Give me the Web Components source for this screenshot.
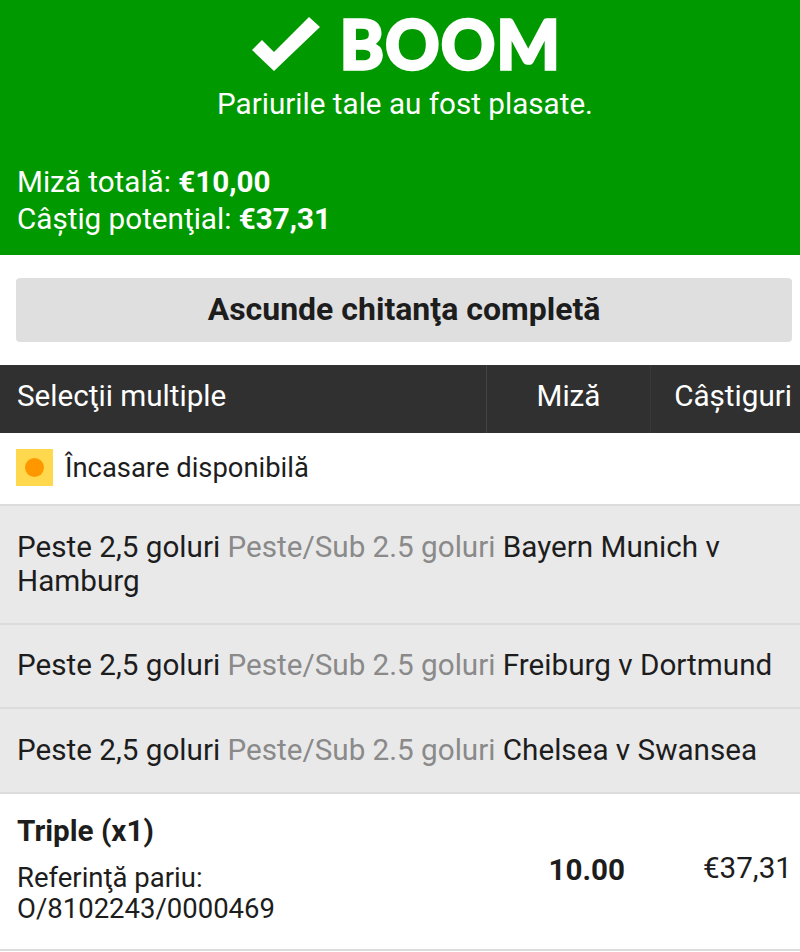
<!DOCTYPE html>
<html lang="ro">
<head>
<meta charset="UTF-8">
<title>Chitanta</title>
<style>
  html, body { margin: 0; padding: 0; background: #fff; overflow: hidden; }
  body { font: 29.65px/34px Roboto, "Noto Sans", sans-serif; color: #1d1d1d; }
</style>
</head>
<body>
  <boom-banner>
    <span slot="stake">Miză totală: <b>€10,00</b></span>
    <span slot="win">Câştig potenţial: <b>€37,31</b></span>
  </boom-banner>
  <toggle-button>Ascunde chitanţa completă</toggle-button>
  <table-head></table-head>
  <cashout-row>Încasare disponibilă</cashout-row>
  <selection-row height="119"><span>Bayern Munich v</span> <span>Hamburg</span></selection-row>
  <selection-row height="84"><span>Freiburg v Dortmund</span></selection-row>
  <selection-row height="85"><span>Chelsea v Swansea</span></selection-row>
  <bet-summary></bet-summary>

  <template id="banner-template">
    <style>
      :host { display: block; height: 255px; background: #009900; color: #fff; box-sizing: border-box; padding: 0 17px; }
      .title { display: flex; justify-content: center; align-items: center; gap: 19px; height: 86px; padding-left: 13px; }
      .title svg { width: 69px; height: 54px; margin-top: 1px; }
      .word { font: 700 67px/86px Lato, sans-serif; letter-spacing: 1.5px; -webkit-text-stroke: 3.5px #fff; paint-order: stroke; }
      .sub { text-align: center; line-height: 36px; margin-bottom: 41px; padding-left: 10px; }
      .line { display: block; line-height: 37px; }
      ::slotted(span) { display: block; }
    </style>
    <div class="title">
      <svg viewBox="0 0 69 54"><path d="M0 33 L10 23 L22 35 L57 0 L68 10 L22 54 Z" fill="#fff"/></svg>
      <span class="word">BOOM</span>
    </div>
    <div class="sub">Pariurile tale au fost plasate.</div>
    <div class="line"><slot name="stake"></slot></div>
    <div class="line"><slot name="win"></slot></div>
  </template>

  <template id="toggle-template">
    <style>
      :host { display: block; padding: 23px 8px 23px 16px; }
      div { height: 64px; box-sizing: border-box; padding-bottom: 2px; background: #dfdfdf; border-radius: 4px; display: flex; align-items: center; justify-content: center; font-weight: 700; font-size: 32px; }
    </style>
    <div><slot></slot></div>
  </template>

  <template id="head-template">
    <style>
      :host { display: grid; grid-template-columns: 486px 164px 150px; height: 68px; background: #303030; color: #fff; align-items: stretch; }
      div { display: flex; align-items: center; box-sizing: border-box; padding-bottom: 6px; }
      .a { padding-left: 17px; }
      .b { justify-content: center; border-left: 1px solid #444; }
      .c { justify-content: flex-end; padding-right: 8px; border-left: 1px solid #383838; }
    </style>
    <div class="a">Selecţii multiple</div>
    <div class="b">Miză</div>
    <div class="c">Câştiguri</div>
  </template>

  <template id="cashout-template">
    <style>
      :host { display: flex; align-items: center; gap: 12px; height: 71px; box-sizing: border-box; padding: 0 0 2px 16px; font-size: 27.4px; background: #fff; }
      .icon { width: 37px; height: 37px; background: #ffd84d; display: flex; align-items: center; justify-content: center; }
      .icon i { width: 19px; height: 19px; border-radius: 50%; background: #ff9800; }
    </style>
    <span class="icon"><i></i></span>
    <span class="label"><slot></slot></span>
  </template>

  <template id="selection-template">
    <style>
      :host { display: flex; align-items: center; box-sizing: border-box; border-top: 2px solid #dcdcdc; background: #e9e9e9; padding: 0 17px 2px; }
      .mkt { color: #8a8a8a; }
    </style>
    <div><span>Peste 2,5 goluri</span> <span class="mkt">Peste/Sub 2.5 goluri</span> <slot></slot></div>
  </template>

  <template id="summary-template">
    <style>
      :host { display: grid; grid-template-columns: 486px 164px 150px; height: 159px; box-sizing: border-box; border-top: 2px solid #dcdcdc; border-bottom: 2px solid #dcdcdc; background: #fff; align-items: center; }
      .info { padding: 0 0 5px 17px; }
      .t { font-weight: 700; margin-bottom: 14px; }
      .r { font-size: 27.5px; line-height: 31px; }
      .stake { font-weight: 700; text-align: right; padding-right: 25px; padding-bottom: 3px; }
      .win { text-align: right; padding-right: 8px; padding-bottom: 7px; }
    </style>
    <div class="info">
      <div class="t">Triple (x1)</div>
      <div class="r">Referinţă pariu:<br>O/8102243/0000469</div>
    </div>
    <div class="stake">10.00</div>
    <div class="win">€37,31</div>
  </template>

  <script>
    // clones the template with the given id into an open shadow root
    function stamp(el, id) {
      const root = el.attachShadow({ mode: 'open' })
      root.appendChild(document.querySelector(id).content.cloneNode(true))
      return root
    }

    class BoomBanner extends HTMLElement {
      constructor() { super(); stamp(this, '#banner-template') }
    }
    class ToggleButton extends HTMLElement {
      constructor() { super(); stamp(this, '#toggle-template') }
    }
    class TableHead extends HTMLElement {
      constructor() { super(); stamp(this, '#head-template') }
    }
    class CashoutRow extends HTMLElement {
      constructor() { super(); stamp(this, '#cashout-template') }
    }
    class SelectionRow extends HTMLElement {
      connectedCallback() {
        if (this.shadowRoot) return
        stamp(this, '#selection-template')
        this.style.height = this.getAttribute('height') + 'px'
      }
    }
    class BetSummary extends HTMLElement {
      constructor() { super(); stamp(this, '#summary-template') }
    }

    customElements.define('boom-banner', BoomBanner)
    customElements.define('toggle-button', ToggleButton)
    customElements.define('table-head', TableHead)
    customElements.define('cashout-row', CashoutRow)
    customElements.define('selection-row', SelectionRow)
    customElements.define('bet-summary', BetSummary)
  </script>
</body>
</html>
